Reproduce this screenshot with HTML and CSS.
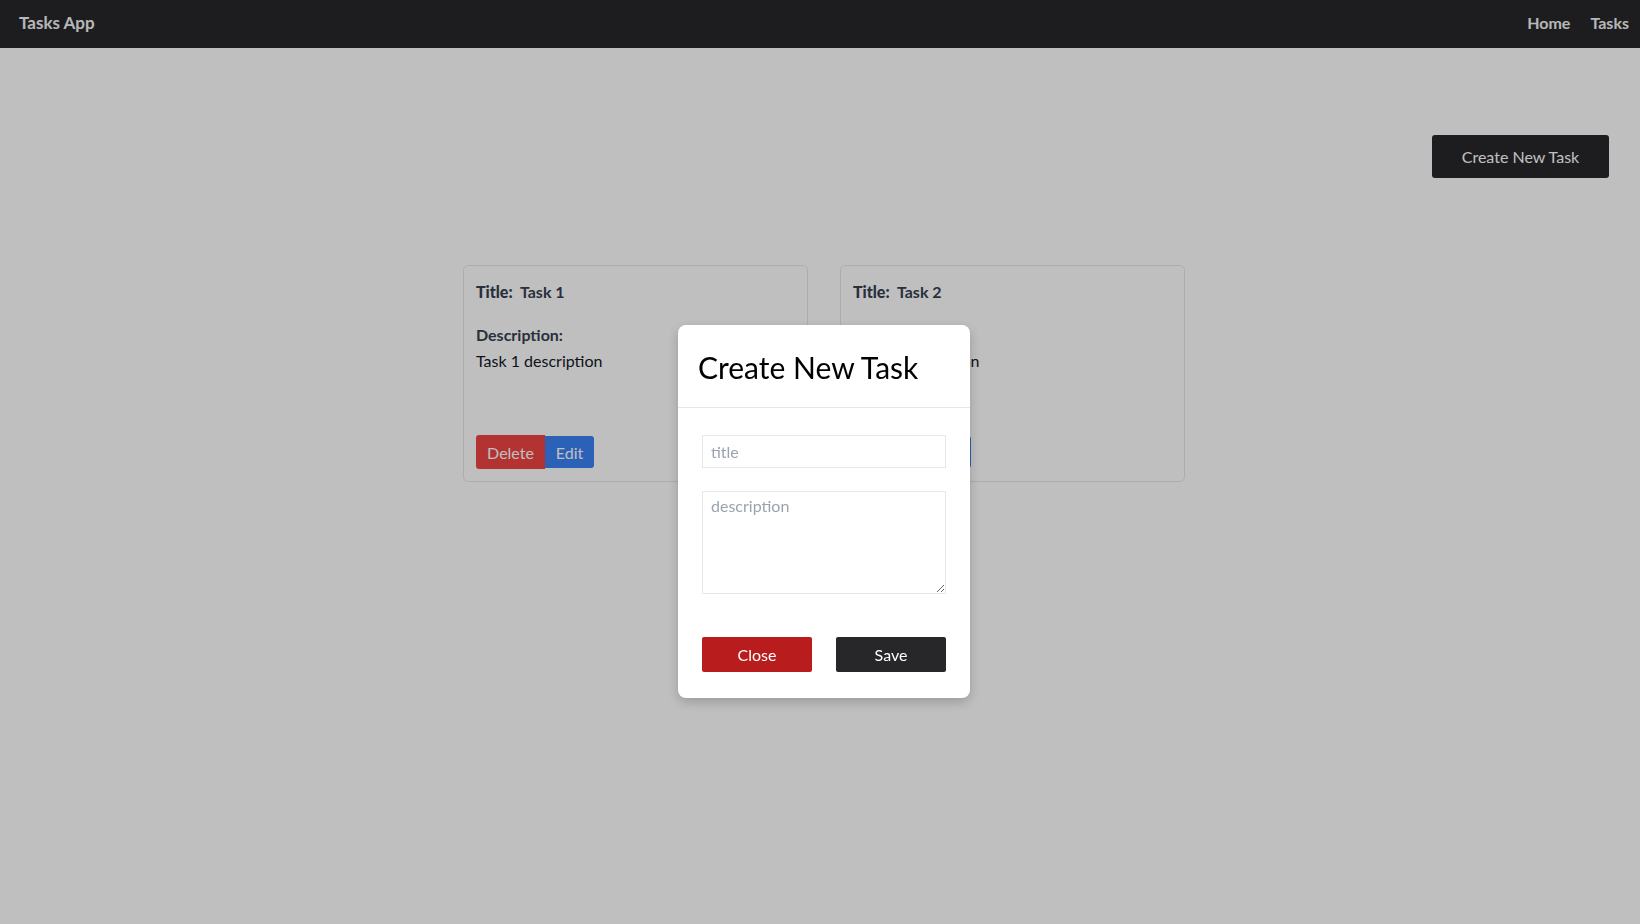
FILE: index.html
```html
<!DOCTYPE html>
<html lang="en">
<head>
<meta charset="utf-8">
<title>Tasks App</title>
<link rel="stylesheet" href="styles.css">
</head>
<body>
<nav class="navbar">
  <a class="brand" href="#">Tasks App</a>
  <div class="nav-links">
    <a href="#">Home</a>
    <a href="#">Tasks</a>
  </div>
</nav>
<main class="main">
  <div class="toolbar">
    <button class="btn btn-dark btn-create">Create New Task</button>
  </div>
  <section class="cards">
    <article class="card">
      <p class="card-title"><strong>Title:</strong>&nbsp; Task 1</p>
      <p class="card-label">Description:</p>
      <p class="card-desc">Task 1 description</p>
      <div class="card-actions">
        <button class="btn btn-red">Delete</button><button class="btn btn-blue">Edit</button>
      </div>
    </article>
    <article class="card">
      <p class="card-title"><strong>Title:</strong>&nbsp; Task 2</p>
      <p class="card-label">Description:</p>
      <p class="card-desc">Task 2 description</p>
      <div class="card-actions">
        <button class="btn btn-red">Delete</button><button class="btn btn-blue">Edit</button>
      </div>
    </article>
  </section>
</main>
<div class="overlay">
  <div class="modal">
    <div class="modal-header">
      <h2>Create New Task</h2>
    </div>
    <form class="modal-body">
      <input class="field" type="text" placeholder="title">
      <textarea class="field area" placeholder="description"></textarea>
      <div class="modal-actions">
        <button type="button" class="btn btn-close">Close</button>
        <button type="button" class="btn btn-save">Save</button>
      </div>
    </form>
  </div>
</div>
</body>
</html>
```
FILE: styles.css
```css
* { box-sizing: border-box; }
html, body { margin: 0; height: 100%; }
body {
  font-family: "Lato", "Open Sans", sans-serif;
  background: #ffffff;
  color: #1f2937;
  font-size: 16px;
}
.navbar {
  height: 48px;
  background: #27272a;
  display: flex;
  align-items: center;
  justify-content: space-between;
  padding: 0 11px 4px 19px;
}
.navbar a {
  color: #f3f4f6;
  text-decoration: none;
  font-weight: 700;
  font-size: 16px;
}
.navbar .brand { font-size: 17px; }
.nav-links { display: flex; gap: 20px; }
.main { padding: 87px 31px 0 0; }
.toolbar { display: flex; justify-content: flex-end; }
.btn {
  font-family: inherit;
  font-size: 16px;
  border: none;
  cursor: pointer;
  color: #ffffff;
}
.btn-create {
  width: 177px;
  height: 43px;
  background: #27272a;
  border-radius: 3px;
}
.cards {
  display: flex;
  justify-content: center;
  gap: 32px;
  margin-top: 87px;
  padding-left: 39px;
}
.card {
  width: 345px;
  height: 217px;
  border: 1px solid #e5e7eb;
  border-radius: 5px;
  padding: 14px 12px 0;
  display: flex;
  flex-direction: column;
  color: #374151;
}
.card p { margin: 0; }
.card-title { font-weight: 700; line-height: 24px; }
.card-label { font-weight: 700; margin-top: 19px !important; line-height: 24px; }
.card-desc { line-height: 28px; color: #111827; }
.card-actions { margin-top: 60px; display: flex; align-items: center; }
.btn-red {
  background: #ef4444;
  height: 34px;
  width: 69px;
  border-radius: 3px 0 0 3px;
}
.btn-blue {
  background: #3b82f6;
  height: 32px;
  width: 49px;
  border-radius: 0 3px 3px 0;
}
.overlay {
  position: fixed;
  inset: 0;
  background: rgba(0, 0, 0, 0.25);
  display: flex;
  justify-content: center;
  align-items: flex-start;
  padding: 325px 0 0 8px;
}
.modal {
  width: 292px;
  height: 373px;
  background: #ffffff;
  border-radius: 8px;
  box-shadow: 0 4px 12px rgba(0, 0, 0, 0.2);
}
.modal-header {
  height: 83px;
  border-bottom: 1.5px solid #e5e7eb;
  padding: 22px 20px 0;
}
.modal-header h2 {
  margin: 0;
  font-size: 30px;
  font-weight: 400;
  color: #000000;
  line-height: 40px;
}
.modal-body {
  padding: 27px 24px 0;
  display: flex;
  flex-direction: column;
}
.field {
  width: 244px;
  height: 33px;
  border: 1.5px solid #e5e7eb;
  font-family: inherit;
  font-size: 16px;
  padding: 0 8px;
  color: #111827;
  outline: none;
}
.field::placeholder { color: #9ca3af; }
.area {
  height: 103px;
  margin-top: 23px;
  padding-top: 4px;
  resize: vertical;
}
.modal-actions {
  margin-top: 43px;
  display: flex;
  justify-content: space-between;
}
.btn-close, .btn-save {
  width: 110px;
  height: 35px;
  border-radius: 2px;
}
.btn-close { background: #b91c1c; }
.btn-save { background: #27272a; }
```
